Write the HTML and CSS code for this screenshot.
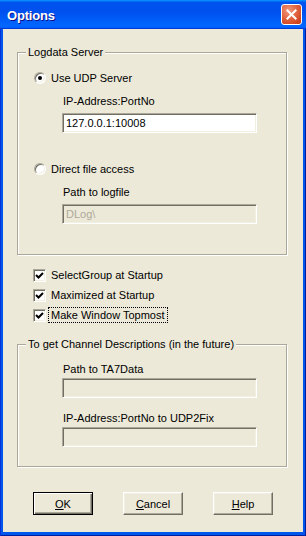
FILE: index.html
```html
<!DOCTYPE html>
<html lang="en">
<head>
  <meta charset="UTF-8">
  <title>Options</title>
  <link rel="stylesheet" href="styles.css">
</head>
<body>
  <div class="window">
    <div class="titlebar">
      <span class="title">Options</span>
      <button class="close" aria-label="Close">
        <svg width="21" height="21" viewBox="0 0 21 21">
          <path d="M6 6 L15 15 M15 6 L6 15" stroke="#fff" stroke-width="2.2" stroke-linecap="square"/>
        </svg>
      </button>
    </div>

    <div class="client">
      <fieldset class="group">
        <legend>Logdata Server</legend>
        <div class="row">
          <span class="radio checked"></span>
          <span>Use UDP Server</span>
        </div>
        <div class="caption">IP-Address:PortNo</div>
        <input class="edit" type="text" value="127.0.0.1:10008">

        <div class="row second">
          <span class="radio"></span>
          <span>Direct file access</span>
        </div>
        <div class="caption">Path to logfile</div>
        <input class="edit" type="text" value="DLog\" disabled>
      </fieldset>

      <div class="checks">
        <div class="row">
          <span class="check"><svg width="9" height="9" viewBox="0 0 9 9"><path d="M1 4 L3.5 6.5 L8 2" fill="none" stroke="#000" stroke-width="2"/></svg></span>
          <span>SelectGroup at Startup</span>
        </div>
        <div class="row">
          <span class="check"><svg width="9" height="9" viewBox="0 0 9 9"><path d="M1 4 L3.5 6.5 L8 2" fill="none" stroke="#000" stroke-width="2"/></svg></span>
          <span>Maximized at Startup</span>
        </div>
        <div class="row">
          <span class="check"><svg width="9" height="9" viewBox="0 0 9 9"><path d="M1 4 L3.5 6.5 L8 2" fill="none" stroke="#000" stroke-width="2"/></svg></span>
          <span class="focus">Make Window Topmost</span>
        </div>
      </div>

      <fieldset class="group future">
        <legend>To get Channel Descriptions (in the future)</legend>
        <div class="caption">Path to TA7Data</div>
        <input class="edit" type="text" disabled>
        <div class="caption">IP-Address:PortNo to UDP2Fix</div>
        <input class="edit" type="text" disabled>
      </fieldset>

      <div class="buttons">
        <button class="btn default"><u>O</u>K</button>
        <button class="btn"><u>C</u>ancel</button>
        <button class="btn"><u>H</u>elp</button>
      </div>
    </div>
  </div>
</body>
</html>
```

FILE: styles.css
```css
body {
  margin: 0;
  font-family: "Liberation Sans", Arial, sans-serif;
  font-size: 11px;
  color: #000;
  background: #ece9d8;
}
.window {
  width: 306px;
  height: 536px;
  box-sizing: border-box;
  display: flex;
  flex-direction: column;
  background: #0055ea;
  padding-bottom: 4px;
  box-shadow: inset 1px 0 #0831d9, inset -1px 0 #001ea0, inset 0 -1px #001ea0;
}
.titlebar {
  height: 29px;
  display: flex;
  align-items: center;
  justify-content: space-between;
  padding: 0 4px 0 7px;
  background: linear-gradient(180deg, #0997ff, #0053ee 8%, #0050ee 40%, #0066ff 88%, #0066ff 93%, #005bff 95%, #003dd7 96%, #003dd7);
}
.title {
  color: #fff;
  font-weight: bold;
  font-size: 13px;
  letter-spacing: -0.2px;
  text-shadow: 1px 1px #0f1089;
  padding-top: 1px;
}
.close {
  width: 21px;
  height: 21px;
  padding: 0;
  border: 1px solid #fff;
  border-radius: 3px;
  background: radial-gradient(circle at 35% 30%, #f19a7c, #e0603c 50%, #c2350f);
  display: flex;
  align-items: center;
  justify-content: center;
}
.close svg {
  display: block;
}
.client {
  flex: 1;
  margin: 0 3px;
  background: #ece9d8;
  padding-top: 17px;
  display: flex;
  flex-direction: column;
}
.group {
  margin: 0 16px 0 14px;
  padding: 12px 16px 30px;
  border: 1px solid #aca899;
  box-shadow: inset 1px 1px #fff, 1px 1px #fff;
  display: flex;
  flex-direction: column;
  align-items: flex-start;
}
.group legend {
  line-height: 13px;
  padding: 0 2px;
  margin-left: -8px;
  background: #ece9d8;
}
.row {
  display: flex;
  align-items: center;
  gap: 5px;
  height: 13px;
}
.row.second {
  margin-top: 29px;
}
.radio {
  width: 12px;
  height: 12px;
  box-sizing: border-box;
  border-radius: 50%;
  border: 1px solid;
  border-color: #aca899 #fff #fff #aca899;
  box-shadow: inset 1px 1px #716f64, inset -1px -1px #f1efe2;
  background: #fff;
  display: flex;
  align-items: center;
  justify-content: center;
}
.radio.checked::after {
  content: "";
  width: 4px;
  height: 4px;
  border-radius: 50%;
  background: #000;
}
.caption {
  line-height: 13px;
  margin: 11px 0 0 29px;
}
.edit {
  width: 195px;
  height: 20px;
  box-sizing: border-box;
  margin: 5px 0 0 28px;
  padding: 0 3px;
  font: inherit;
  color: #000;
  background: #fff;
  border: 1px solid;
  border-color: #aca899 #fff #fff #aca899;
  box-shadow: inset 1px 1px #716f64, inset -1px -1px #f1efe2;
  outline: none;
}
.edit:disabled {
  background: #ece9d8;
  color: #aca899;
}
.checks {
  margin-top: 10px;
  padding-left: 30px;
  display: flex;
  flex-direction: column;
}
.checks .row {
  height: 20px;
}
.check {
  width: 13px;
  height: 13px;
  box-sizing: border-box;
  border: 1px solid;
  border-color: #aca899 #fff #fff #aca899;
  box-shadow: inset 1px 1px #716f64, inset -1px -1px #f1efe2;
  background: #fff;
  display: flex;
  align-items: center;
  justify-content: center;
}
.focus {
  outline: 1px dotted #000;
  outline-offset: 1px;
  padding: 0 1px;
  margin-left: -1px;
}
.future {
  margin-top: 13px;
  padding-bottom: 19px;
}
.future .caption {
  margin-top: 14px;
}
.future .caption:first-of-type {
  margin-top: 0;
}
.future .edit {
  margin-top: 2px;
}
.buttons {
  margin-top: 25px;
  padding-left: 30px;
  display: flex;
  gap: 30px;
}
.btn {
  width: 60px;
  height: 23px;
  padding: 0;
  font: inherit;
  color: #000;
  background: #ece9d8;
  border: 1px solid;
  border-color: #fff #716f64 #716f64 #fff;
  box-shadow: inset -1px -1px #aca899, inset 1px 1px #f1efe2;
}
.btn.default {
  border: 1px solid #000;
  box-shadow: inset 1px 1px #fff, inset -1px -1px #716f64, inset -2px -2px #aca899;
}
```
